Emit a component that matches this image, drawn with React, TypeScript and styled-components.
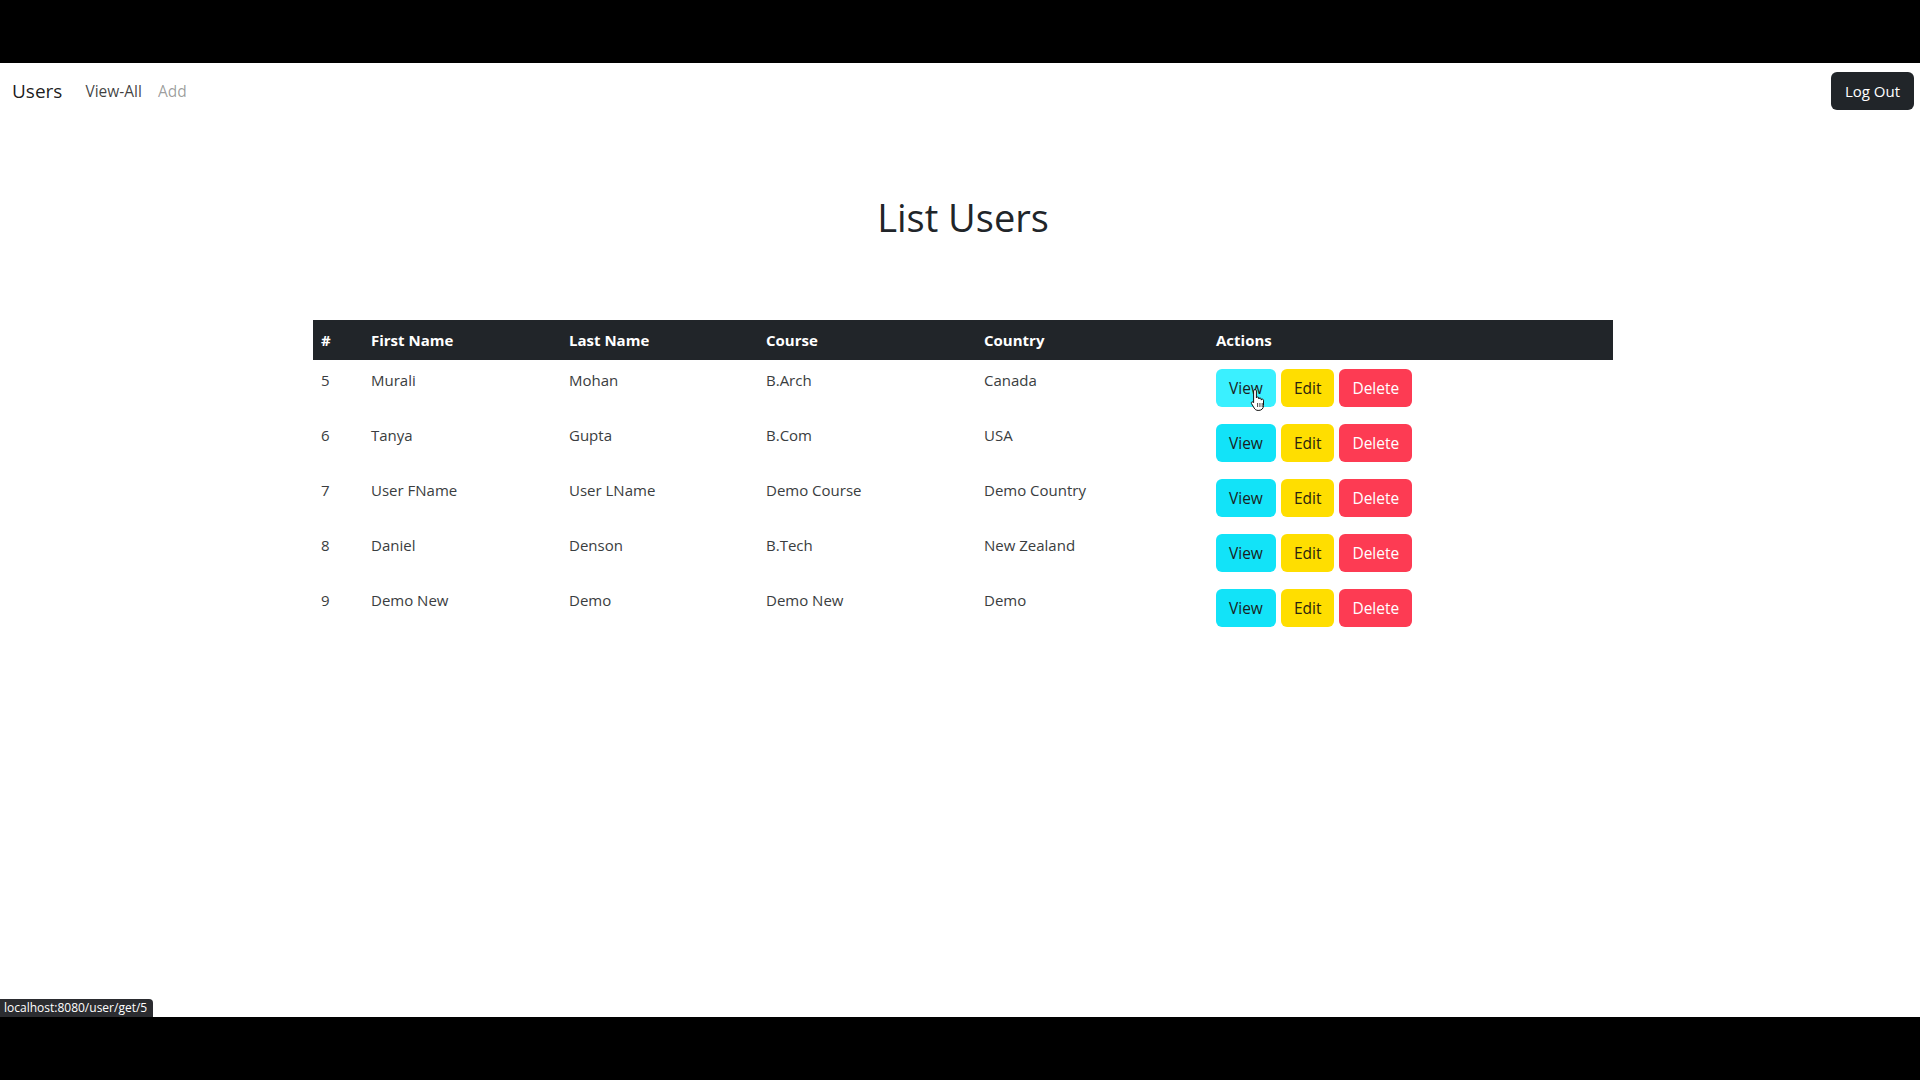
import React from 'react'
import styled, { createGlobalStyle } from 'styled-components'

const GlobalStyle = createGlobalStyle`
  * { box-sizing: border-box; }
  body {
    margin: 0;
    background: #000000;
    font-family: 'Open Sans', 'Noto Sans', sans-serif;
    color: #212529;
  }
`

const Frame = styled.div`
  display: flex;
  flex-direction: column;
  height: 1080px;
`

const BlackBand = styled.div`
  height: 63px;
  background: #000000;
  flex-shrink: 0;
`

const Screen = styled.div`
  position: relative;
  flex: 1;
  background: #ffffff;
  display: flex;
  flex-direction: column;
`

const NavBar = styled.nav`
  display: flex;
  align-items: center;
  height: 56px;
  padding: 0 6px 0 12px;
`

const Brand = styled.span`
  font-size: 19px;
  color: rgba(0, 0, 0, 0.9);
  margin-right: 15px;
`

const NavLink = styled.a<{ $muted?: boolean }>`
  font-size: 15.5px;
  padding: 0 8px;
  color: ${(p) => (p.$muted ? 'rgba(0, 0, 0, 0.4)' : 'rgba(0, 0, 0, 0.75)')};
  text-decoration: none;
`

const LogOut = styled.button`
  margin-left: auto;
  height: 38px;
  padding: 0 14px;
  border: none;
  border-radius: 6px;
  background: #212529;
  color: #ffffff;
  font-family: inherit;
  font-size: 15px;
`

const Main = styled.main`
  width: 1300px;
  margin: 0 auto;
  padding-left: 6px;
  box-sizing: content-box;
`

const Title = styled.h1`
  margin: 74px 0 79px;
  text-align: center;
  font-size: 38px;
  font-weight: 500;
  line-height: 48px;
  color: #212529;
`

const Table = styled.table`
  width: 1300px;
  border-collapse: collapse;
  font-size: 15px;
`

const HeadCell = styled.th`
  background: #212529;
  color: #ffffff;
  text-align: left;
  font-weight: 700;
  padding: 8px;
  line-height: 24px;
  height: 40px;
`

const Row = styled.tr`
  height: 55px;
`

const Cell = styled.td`
  vertical-align: top;
  padding: 8px;
  line-height: 24px;
  color: #3a3d40;
`

const Actions = styled.div`
  display: flex;
  gap: 5px;
  padding-top: 1px;
`

const ActionButton = styled.button<{ $bg: string; $fg: string }>`
  position: relative;
  height: 38px;
  padding: 0 13px;
  border: none;
  border-radius: 6px;
  background: ${(p) => p.$bg};
  color: ${(p) => p.$fg};
  font-family: inherit;
  font-size: 15.5px;
`

const Pointer = styled.svg`
  position: absolute;
  left: 34px;
  top: 19px;
  pointer-events: none;
`

const StatusTip = styled.div`
  position: absolute;
  left: 0;
  bottom: 0;
  height: 18px;
  padding: 0 6px 0 4px;
  background: #2b2c30;
  border-top-right-radius: 4px;
  color: #ffffff;
  font-size: 12px;
  line-height: 18px;
`

type User = {
  id: number
  first: string
  last: string
  course: string
  country: string
}

const users: User[] = [
  { id: 5, first: 'Murali', last: 'Mohan', course: 'B.Arch', country: 'Canada' },
  { id: 6, first: 'Tanya', last: 'Gupta', course: 'B.Com', country: 'USA' },
  { id: 7, first: 'User FName', last: 'User LName', course: 'Demo Course', country: 'Demo Country' },
  { id: 8, first: 'Daniel', last: 'Denson', course: 'B.Tech', country: 'New Zealand' },
  { id: 9, first: 'Demo New', last: 'Demo', course: 'Demo New', country: 'Demo' },
]

const widths = [50, 198, 197, 218, 232, 405]

const HandCursor = () => (
  <Pointer width="16" height="24" viewBox="0 0 16 24">
    <path
      d="M5 1.5c.8 0 1.4.6 1.4 1.4V10c0-.6.5-1 1.2-1s1.2.5 1.2 1.1V11c0-.6.5-1 1.2-1s1.2.5 1.2 1.1v1c0-.6.5-1 1.1-1s1.2.5 1.2 1.1v5.3c0 2.8-1.8 4.9-4.6 4.9H8c-1.8 0-2.9-.9-3.8-2.3L1.5 15.6c-.4-.6-.2-1.3.4-1.6.6-.3 1.2 0 1.6.5l.1.2V2.9c0-.8.6-1.4 1.4-1.4z"
      fill="#ffffff"
      stroke="#111111"
      strokeWidth="1"
    />
    <path d="M7.6 15v4M9.9 15v4M12.2 15v4" stroke="#111111" strokeWidth="0.8" />
  </Pointer>
)

const App: React.FC = () => {
  return (
    <>
      <GlobalStyle />
      <Frame>
        <BlackBand />
        <Screen>
          <NavBar>
            <Brand>Users</Brand>
            <NavLink>View-All</NavLink>
            <NavLink $muted>Add</NavLink>
            <LogOut>Log Out</LogOut>
          </NavBar>
          <Main>
            <Title>List Users</Title>
            <Table>
              <colgroup>
                {widths.map((w, i) => (
                  <col key={i} style={{ width: w }} />
                ))}
              </colgroup>
              <thead>
                <tr>
                  <HeadCell>#</HeadCell>
                  <HeadCell>First Name</HeadCell>
                  <HeadCell>Last Name</HeadCell>
                  <HeadCell>Course</HeadCell>
                  <HeadCell>Country</HeadCell>
                  <HeadCell>Actions</HeadCell>
                </tr>
              </thead>
              <tbody>
                {users.map((u, i) => (
                  <Row key={u.id}>
                    <Cell>{u.id}</Cell>
                    <Cell>{u.first}</Cell>
                    <Cell>{u.last}</Cell>
                    <Cell>{u.course}</Cell>
                    <Cell>{u.country}</Cell>
                    <Cell>
                      <Actions>
                        <ActionButton $bg={i === 0 ? '#3af0ff' : '#12e3f8'} $fg="#1a1d20">
                          View
                          {i === 0 && <HandCursor />}
                        </ActionButton>
                        <ActionButton $bg="#ffde00" $fg="#2a2410">
                          Edit
                        </ActionButton>
                        <ActionButton $bg="#fd3b53" $fg="#ffffff">
                          Delete
                        </ActionButton>
                      </Actions>
                    </Cell>
                  </Row>
                ))}
              </tbody>
            </Table>
          </Main>
          <StatusTip>localhost:8080/user/get/5</StatusTip>
        </Screen>
        <BlackBand />
      </Frame>
    </>
  )
}

export default App
